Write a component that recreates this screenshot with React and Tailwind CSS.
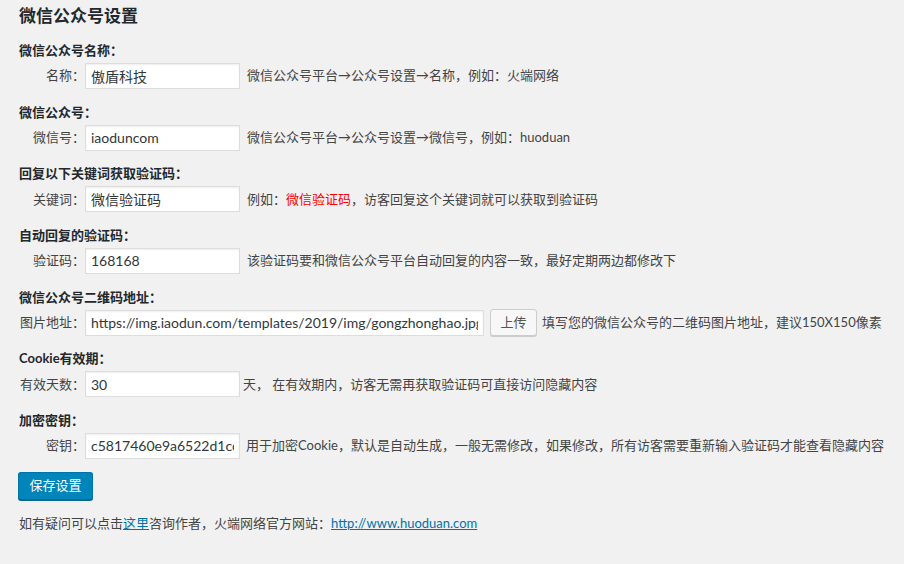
import React from "react";

const font = "font-['Lato','Noto_Sans_CJK_SC',sans-serif]";

function Section({ title, children }) {
  return (
    <div className="mb-[12.67px]">
      <div className="h-[20px] leading-[20px] text-[13px] font-bold text-[#23282d]">{title}</div>
      <div className="mt-[3px] flex items-center h-[26px]">{children}</div>
    </div>
  );
}

function Label({ children }) {
  return <span className="w-[66px] shrink-0 text-right text-[13px] text-[#444]">{children}</span>;
}

function Input({ value, w = "w-[155px]" }) {
  return (
    <input
      readOnly
      value={value}
      className={`${w} h-[26px] shrink-0 border border-[#ddd] bg-white px-[5px] text-[14px] text-[#32373c] shadow-[inset_0_1px_2px_rgba(0,0,0,0.07)] outline-none ${font}`}
    />
  );
}

export default function App() {
  return (
    <div className={`w-[904px] h-[564px] bg-[#f1f1f1] text-[13px] text-[#444] pl-[19px] ${font}`}>
      <div className="h-[32px] leading-[32px] text-[17px] font-bold text-[#23282d]">微信公众号设置</div>
      <div className="mt-[8px]">
        <Section title="微信公众号名称：">
          <Label>名称：</Label>
          <Input value="傲盾科技" />
          <span className="ml-[7px] whitespace-nowrap">微信公众号平台→公众号设置→名称，例如：火端网络</span>
        </Section>
        <Section title="微信公众号：">
          <Label>微信号：</Label>
          <Input value="iaoduncom" />
          <span className="ml-[7px] whitespace-nowrap">微信公众号平台→公众号设置→微信号，例如：huoduan</span>
        </Section>
        <Section title="回复以下关键词获取验证码：">
          <Label>关键词：</Label>
          <Input value="微信验证码" />
          <span className="ml-[7px] whitespace-nowrap">
            例如：<span className="text-[#f00]">微信验证码</span>，访客回复这个关键词就可以获取到验证码
          </span>
        </Section>
        <Section title="自动回复的验证码：">
          <Label>验证码：</Label>
          <Input value="168168" />
          <span className="ml-[7px] whitespace-nowrap">该验证码要和微信公众号平台自动回复的内容一致，最好定期两边都修改下</span>
        </Section>
        <Section title="微信公众号二维码地址：">
          <Label>图片地址：</Label>
          <Input value="https://img.iaodun.com/templates/2019/img/gongzhonghao.jpg" w="w-[399px]" />
          <button className="ml-[6px] h-[27px] w-[47px] shrink-0 rounded-[3px] border border-[#ccc] bg-[#f7f7f7] text-[13px] text-[#555] shadow-[0_1px_0_#ccc]">
            上传
          </button>
          <span className="ml-[5px] whitespace-nowrap">填写您的微信公众号的二维码图片地址，建议150X150像素</span>
        </Section>
        <Section title="Cookie有效期：">
          <Label>有效天数：</Label>
          <Input value="30" />
          <span className="ml-[3px] whitespace-nowrap">天， 在有效期内，访客无需再获取验证码可直接访问隐藏内容</span>
        </Section>
        <Section title="加密密钥：">
          <Label>密钥：</Label>
          <Input value="c5817460e9a6522d1cc8f0" />
          <span className="ml-[6px] whitespace-nowrap">用于加密Cookie，默认是自动生成，一般无需修改，如果修改，所有访客需要重新输入验证码才能查看隐藏内容</span>
        </Section>
      </div>
      <div className="mt-[2px] -ml-[1px]">
        <button className="h-[28px] w-[75px] rounded-[3px] border border-[#0073aa] border-b-[#006799] bg-[#0085ba] text-[13px] text-white shadow-[0_1px_0_#006799]">
          保存设置
        </button>
      </div>
      <div className="mt-[13px] h-[20px] leading-[20px]">
        如有疑问可以点击<a className="text-[#0073aa] underline">这里</a>咨询作者，火端网络官方网站：
        <a className="text-[#0073aa] underline">http://www.huoduan.com</a>
      </div>
    </div>
  );
}
